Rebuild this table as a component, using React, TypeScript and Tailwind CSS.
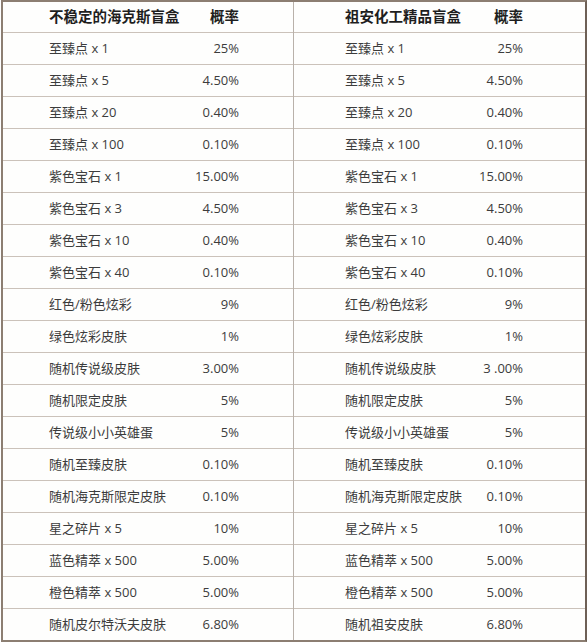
import React from 'react'

const left = [
  ['至臻点 x 1', '25%'],
  ['至臻点 x 5', '4.50%'],
  ['至臻点 x 20', '0.40%'],
  ['至臻点 x 100', '0.10%'],
  ['紫色宝石 x 1', '15.00%'],
  ['紫色宝石 x 3', '4.50%'],
  ['紫色宝石 x 10', '0.40%'],
  ['紫色宝石 x 40', '0.10%'],
  ['红色/粉色炫彩', '9%'],
  ['绿色炫彩皮肤', '1%'],
  ['随机传说级皮肤', '3.00%'],
  ['随机限定皮肤', '5%'],
  ['传说级小小英雄蛋', '5%'],
  ['随机至臻皮肤', '0.10%'],
  ['随机海克斯限定皮肤', '0.10%'],
  ['星之碎片 x 5', '10%'],
  ['蓝色精萃 x 500', '5.00%'],
  ['橙色精萃 x 500', '5.00%'],
  ['随机皮尔特沃夫皮肤', '6.80%'],
]

const right = left.map(([name, p], i) => {
  if (i === 10) return [name, '3 .00%']
  if (i === 18) return ['随机祖安皮肤', p]
  return [name, p]
})

function Half({
  title,
  rows,
  pad,
  nameW,
  wide,
}: {
  title: string
  rows: string[][]
  pad: string
  nameW: string
  wide?: boolean
}) {
  return (
    <div className={wide ? 'w-[291px]' : 'w-[290px]'}>
      <div className={`flex h-[30px] items-center whitespace-nowrap ${pad} text-[14.5px] font-bold text-[#1e1e1e]`}>
        <span className={`${nameW} shrink-0`}>{title}</span>
        <span className="w-[60px] shrink-0 text-right">概率</span>
      </div>
      {rows.map(([name, p]) => (
        <div
          key={name}
          className={`flex h-[32px] items-center whitespace-nowrap border-t border-[#cbc2ba] ${pad} text-[13px] text-[#3c3c3c]`}
        >
          <span className={`${nameW} shrink-0`}>{name}</span>
          <span className="w-[60px] shrink-0 text-right">{p}</span>
        </div>
      ))}
    </div>
  )
}

export default function App() {
  return (
    <div className="h-[642px] w-[587px] bg-white" style={{ fontFamily: '"Open Sans", "Noto Sans CJK SC", sans-serif' }}>
      <div className="ml-[1px] flex h-[642px] w-[586px] border-2 border-[#8c7e72] border-r-[#6e6056] bg-[#fefefd]">
        <Half title="不稳定的海克斯盲盒" rows={left} pad="pl-[46px]" nameW="w-[130px]" />
        <div className="w-px bg-[#b9b1aa]" />
        <Half title="祖安化工精品盲盒" rows={right} pad="pl-[51px]" nameW="w-[118px]" wide />
      </div>
    </div>
  )
}
